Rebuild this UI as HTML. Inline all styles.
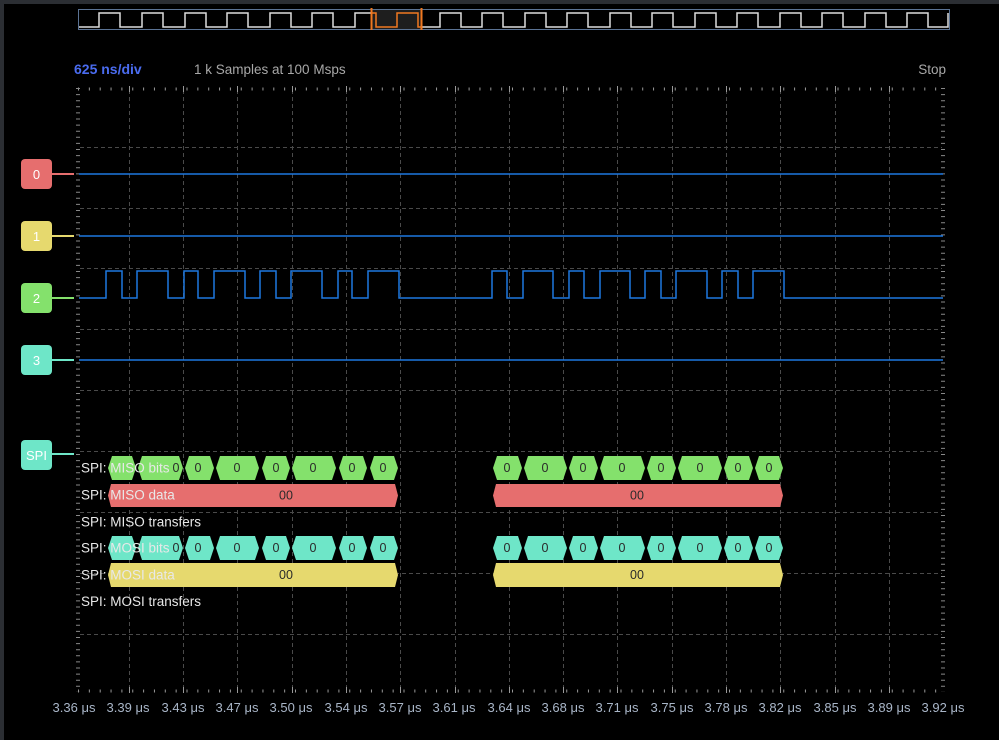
<!DOCTYPE html><html><head><meta charset="utf-8"><style>
html,body{margin:0;padding:0;background:#000;width:999px;height:740px;overflow:hidden}
svg{display:block}
text{font-family:"Liberation Sans",sans-serif}
</style></head><body>
<svg width="999" height="740" viewBox="0 0 999 740">
<rect x="0" y="0" width="999" height="740" fill="#000"/>
<rect x="0" y="0" width="999" height="4" fill="#2b2e33"/>
<rect x="0" y="0" width="4" height="740" fill="#2b2e33"/>
<!-- overview -->
<rect x="371" y="10" width="50" height="20" fill="#1e1e1e"/>
<polyline fill="none" stroke="#ddd" stroke-width="1.5" points="79,27 99,27 99,13 120,13 120,27 142,27 142,13 163,13 163,27 185,27 185,13 206,13 206,27 227,27 227,13 248,13 248,27 270,27 270,13 291,13 291,27 312,27 312,13 333,13 333,27 355,27 355,13 371,13"/>
<polyline fill="none" stroke="#f07820" stroke-width="1.5" points="371,13 376,13 376,27 397,27 397,13 418,13 418,27 421,27"/>
<polyline fill="none" stroke="#ddd" stroke-width="1.5" points="421,27 440,27 440,13 461,13 461,27 482,27 482,13 503,13 503,27 525,27 525,13 546,13 546,27 567,27 567,13 588,13 588,27 610,27 610,13 631,13 631,27 652,27 652,13 673,13 673,27 695,27 695,13 716,13 716,27 737,27 737,13 758,13 758,27 780,27 780,13 801,13 801,27 822,27 822,13 843,13 843,27 865,27 865,13 886,13 886,27 907,27 907,13 928,13 928,27 948,27 948,13"/>
<rect x="78.5" y="9.5" width="871" height="20" fill="none" stroke="#5b7394" stroke-width="1"/>
<line x1="371.5" y1="8" x2="371.5" y2="30" stroke="#f07820" stroke-width="2"/>
<line x1="421.5" y1="8" x2="421.5" y2="30" stroke="#f07820" stroke-width="2"/>
<text x="74" y="74" font-size="14" font-weight="bold" fill="#4a6cf0">625 ns/div</text>
<text x="194" y="74" font-size="13.5" fill="#a8a8a8">1 k Samples at 100 Msps</text>
<text x="946" y="74" font-size="13.5" fill="#a8a8a8" text-anchor="end">Stop</text>
<!-- grid -->
<g stroke="#4a4a4a" stroke-width="1" stroke-dasharray="4 3">
<line x1="129.5" y1="90" x2="129.5" y2="690"/><line x1="183.5" y1="90" x2="183.5" y2="690"/><line x1="237.5" y1="90" x2="237.5" y2="690"/><line x1="292.5" y1="90" x2="292.5" y2="690"/><line x1="346.5" y1="90" x2="346.5" y2="690"/><line x1="400.5" y1="90" x2="400.5" y2="690"/><line x1="455.5" y1="90" x2="455.5" y2="690"/><line x1="509.5" y1="90" x2="509.5" y2="690"/><line x1="563.5" y1="90" x2="563.5" y2="690"/><line x1="617.5" y1="90" x2="617.5" y2="690"/><line x1="672.5" y1="90" x2="672.5" y2="690"/><line x1="726.5" y1="90" x2="726.5" y2="690"/><line x1="780.5" y1="90" x2="780.5" y2="690"/><line x1="835.5" y1="90" x2="835.5" y2="690"/><line x1="889.5" y1="90" x2="889.5" y2="690"/>
<line x1="80" y1="147.5" x2="942" y2="147.5"/><line x1="80" y1="208.5" x2="942" y2="208.5"/><line x1="80" y1="268.5" x2="942" y2="268.5"/><line x1="80" y1="329.5" x2="942" y2="329.5"/><line x1="80" y1="390.5" x2="942" y2="390.5"/><line x1="80" y1="451.5" x2="942" y2="451.5"/><line x1="80" y1="512.5" x2="942" y2="512.5"/><line x1="80" y1="573.5" x2="942" y2="573.5"/><line x1="80" y1="634.5" x2="942" y2="634.5"/>
</g>
<!-- ticks -->
<g stroke="#999" stroke-width="1">
<line x1="78" y1="89" x2="943" y2="89" stroke-width="3" stroke-dasharray="1 9.85"/>
<line x1="78" y1="691" x2="943" y2="691" stroke-width="3" stroke-dasharray="1 9.85"/>
<line x1="78" y1="88" x2="78" y2="692" stroke-width="4" stroke-dasharray="1 5.1" stroke="#888"/>
<line x1="943" y1="88" x2="943" y2="692" stroke-width="4" stroke-dasharray="1 5.1" stroke="#888"/>
</g>
<g stroke="#999" stroke-width="1">
<line x1="129.5" y1="86" x2="129.5" y2="92"/><line x1="183.5" y1="86" x2="183.5" y2="92"/><line x1="237.5" y1="86" x2="237.5" y2="92"/><line x1="292.5" y1="86" x2="292.5" y2="92"/><line x1="346.5" y1="86" x2="346.5" y2="92"/><line x1="400.5" y1="86" x2="400.5" y2="92"/><line x1="455.5" y1="86" x2="455.5" y2="92"/><line x1="509.5" y1="86" x2="509.5" y2="92"/><line x1="563.5" y1="86" x2="563.5" y2="92"/><line x1="617.5" y1="86" x2="617.5" y2="92"/><line x1="672.5" y1="86" x2="672.5" y2="92"/><line x1="726.5" y1="86" x2="726.5" y2="92"/><line x1="780.5" y1="86" x2="780.5" y2="92"/><line x1="835.5" y1="86" x2="835.5" y2="92"/><line x1="889.5" y1="86" x2="889.5" y2="92"/>
<line x1="129.5" y1="687" x2="129.5" y2="693"/><line x1="183.5" y1="687" x2="183.5" y2="693"/><line x1="237.5" y1="687" x2="237.5" y2="693"/><line x1="292.5" y1="687" x2="292.5" y2="693"/><line x1="346.5" y1="687" x2="346.5" y2="693"/><line x1="400.5" y1="687" x2="400.5" y2="693"/><line x1="455.5" y1="687" x2="455.5" y2="693"/><line x1="509.5" y1="687" x2="509.5" y2="693"/><line x1="563.5" y1="687" x2="563.5" y2="693"/><line x1="617.5" y1="687" x2="617.5" y2="693"/><line x1="672.5" y1="687" x2="672.5" y2="693"/><line x1="726.5" y1="687" x2="726.5" y2="693"/><line x1="780.5" y1="687" x2="780.5" y2="693"/><line x1="835.5" y1="687" x2="835.5" y2="693"/><line x1="889.5" y1="687" x2="889.5" y2="693"/>
</g>
<!-- traces -->
<g fill="none" stroke="#1e78e0" stroke-width="1.5">
<line x1="79" y1="174" x2="943" y2="174"/>
<line x1="79" y1="236" x2="943" y2="236"/>
<line x1="79" y1="360" x2="943" y2="360"/>
<polyline points="79,298 106,298 106,271 122,271 122,298 137,298 137,271 168,271 168,298 184,298 184,271 198,271 198,298 214,298 214,271 245,271 245,298 260,298 260,271 276,271 276,298 291,298 291,271 322,271 322,298 338,298 338,271 352,271 352,298 368,298 368,271 399,271 399,298 492,298 492,271 507,271 507,298 523,298 523,271 553,271 553,298 569,298 569,271 584,271 584,298 600,298 600,271 630,271 630,298 645,298 645,271 661,271 661,298 676,298 676,271 707,271 707,298 722,298 722,271 738,271 738,298 753,298 753,271 784,271 784,298 943,298"/>
</g>
<!-- channel labels -->
<line x1="52" y1="174" x2="74" y2="174" stroke="#e66e6e" stroke-width="2"/>
<rect x="21" y="159" width="31" height="30" rx="4" fill="#e66e6e"/>
<text x="36.5" y="179" font-size="13" fill="#fff" text-anchor="middle">0</text>
<line x1="52" y1="236" x2="74" y2="236" stroke="#e6d96e" stroke-width="2"/>
<rect x="21" y="221" width="31" height="30" rx="4" fill="#e6d96e"/>
<text x="36.5" y="241" font-size="13" fill="#fff" text-anchor="middle">1</text>
<line x1="52" y1="298" x2="74" y2="298" stroke="#84e16c" stroke-width="2"/>
<rect x="21" y="283" width="31" height="30" rx="4" fill="#84e16c"/>
<text x="36.5" y="303" font-size="13" fill="#fff" text-anchor="middle">2</text>
<line x1="52" y1="360" x2="74" y2="360" stroke="#6ee6c8" stroke-width="2"/>
<rect x="21" y="345" width="31" height="30" rx="4" fill="#6ee6c8"/>
<text x="36.5" y="365" font-size="13" fill="#fff" text-anchor="middle">3</text>
<line x1="52" y1="454" x2="74" y2="454" stroke="#6ee6c8" stroke-width="2"/>
<rect x="21" y="440" width="31" height="30" rx="4" fill="#6ee6c8"/>
<text x="36.5" y="460" font-size="13" fill="#fff" text-anchor="middle">SPI</text>
<!-- decoded -->
<g fill="#84e16c">
<polygon points="108,468 112,456 132,456 136,468 132,480 112,480"/><polygon points="138,468 142,456 179,456 183,468 179,480 142,480"/><polygon points="185,468 189,456 210,456 214,468 210,480 189,480"/><polygon points="216,468 220,456 255,456 259,468 255,480 220,480"/><polygon points="262,468 266,456 286,456 290,468 286,480 266,480"/><polygon points="292,468 296,456 332,456 336,468 332,480 296,480"/><polygon points="339,468 343,456 363,456 367,468 363,480 343,480"/><polygon points="370,468 374,456 394,456 398,468 394,480 374,480"/>
<polygon points="493,468 497,456 518,456 522,468 518,480 497,480"/><polygon points="524,468 528,456 563,456 567,468 563,480 528,480"/><polygon points="569,468 573,456 594,456 598,468 594,480 573,480"/><polygon points="600,468 604,456 641,456 645,468 641,480 604,480"/><polygon points="647,468 651,456 672,456 676,468 672,480 651,480"/><polygon points="678,468 682,456 718,456 722,468 718,480 682,480"/><polygon points="724,468 728,456 749,456 753,468 749,480 728,480"/><polygon points="755,468 759,456 779,456 783,468 779,480 759,480"/>
</g>
<g fill="#6ee6c8">
<polygon points="108,548 112,536 132,536 136,548 132,560 112,560"/><polygon points="138,548 142,536 179,536 183,548 179,560 142,560"/><polygon points="185,548 189,536 210,536 214,548 210,560 189,560"/><polygon points="216,548 220,536 255,536 259,548 255,560 220,560"/><polygon points="262,548 266,536 286,536 290,548 286,560 266,560"/><polygon points="292,548 296,536 332,536 336,548 332,560 296,560"/><polygon points="339,548 343,536 363,536 367,548 363,560 343,560"/><polygon points="370,548 374,536 394,536 398,548 394,560 374,560"/>
<polygon points="493,548 497,536 518,536 522,548 518,560 497,560"/><polygon points="524,548 528,536 563,536 567,548 563,560 528,560"/><polygon points="569,548 573,536 594,536 598,548 594,560 573,560"/><polygon points="600,548 604,536 641,536 645,548 641,560 604,560"/><polygon points="647,548 651,536 672,536 676,548 672,560 651,560"/><polygon points="678,548 682,536 718,536 722,548 718,560 682,560"/><polygon points="724,548 728,536 749,536 753,548 749,560 728,560"/><polygon points="755,548 759,536 779,536 783,548 779,560 759,560"/>
</g>
<polygon fill="#e66e6e" points="108,495.5 111,484 395,484 398,495.5 395,507 111,507"/>
<polygon fill="#e66e6e" points="493,495.5 496,484 780,484 783,495.5 780,507 496,507"/>
<polygon fill="#e6d96e" points="108,575 111,563 395,563 398,575 395,587 111,587"/>
<polygon fill="#e6d96e" points="493,575 496,563 780,563 783,575 780,587 496,587"/>
<g font-size="12.5" fill="#2a2a2a" text-anchor="middle">
<text x="176" y="472">0</text><text x="198" y="472">0</text><text x="237" y="472">0</text><text x="276" y="472">0</text><text x="313" y="472">0</text><text x="352" y="472">0</text><text x="383" y="472">0</text>
<text x="507" y="472">0</text><text x="545" y="472">0</text><text x="583" y="472">0</text><text x="622" y="472">0</text><text x="661" y="472">0</text><text x="700" y="472">0</text><text x="738" y="472">0</text><text x="769" y="472">0</text>
<text x="176" y="552">0</text><text x="198" y="552">0</text><text x="237" y="552">0</text><text x="276" y="552">0</text><text x="313" y="552">0</text><text x="352" y="552">0</text><text x="383" y="552">0</text>
<text x="507" y="552">0</text><text x="545" y="552">0</text><text x="583" y="552">0</text><text x="622" y="552">0</text><text x="661" y="552">0</text><text x="700" y="552">0</text><text x="738" y="552">0</text><text x="769" y="552">0</text>
<text x="286" y="499.5">00</text><text x="637" y="499.5">00</text>
<text x="286" y="579">00</text><text x="637" y="579">00</text>
</g>
<g font-size="13.5" fill="#e8e8e8">
<text x="81" y="472.5">SPI: MISO bits</text>
<text x="81" y="499.5">SPI: MISO data</text>
<text x="81" y="526.5">SPI: MISO transfers</text>
<text x="81" y="552.5">SPI: MOSI bits</text>
<text x="81" y="579.5">SPI: MOSI data</text>
<text x="81" y="606">SPI: MOSI transfers</text>
</g>
<!-- time labels -->
<g font-size="13" fill="#a9b6c8" text-anchor="middle">
<text x="74" y="712">3.36 μs</text><text x="128" y="712">3.39 μs</text><text x="183" y="712">3.43 μs</text><text x="237" y="712">3.47 μs</text><text x="291" y="712">3.50 μs</text><text x="346" y="712">3.54 μs</text><text x="400" y="712">3.57 μs</text><text x="454" y="712">3.61 μs</text><text x="509" y="712">3.64 μs</text><text x="563" y="712">3.68 μs</text><text x="617" y="712">3.71 μs</text><text x="672" y="712">3.75 μs</text><text x="726" y="712">3.78 μs</text><text x="780" y="712">3.82 μs</text><text x="835" y="712">3.85 μs</text><text x="889" y="712">3.89 μs</text><text x="943" y="712">3.92 μs</text>
</g>
</svg>
</body></html>
